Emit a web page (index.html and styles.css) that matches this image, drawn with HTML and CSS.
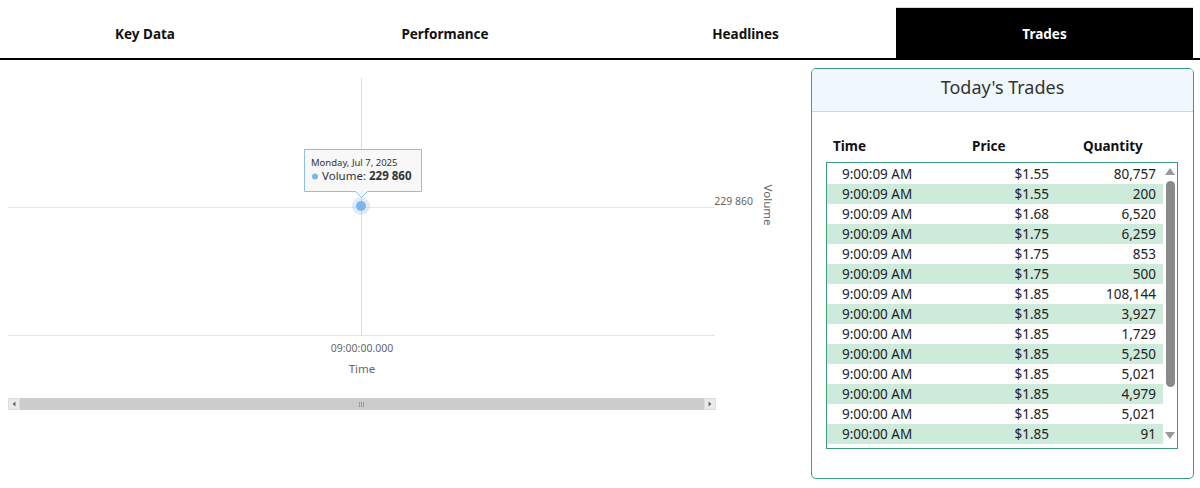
FILE: index.html
```html
<!DOCTYPE html>
<html>
<head>
<meta charset="utf-8">
<link rel="stylesheet" href="styles.css">
</head>
<body>
<div class="tabbar">
  <div class="tabs">
    <div class="tab">Key Data</div>
    <div class="tab">Performance</div>
    <div class="tab">Headlines</div>
    <div class="tab active">Trades</div>
  </div>
</div>
<div class="main">
  <div class="chart">
    <svg class="chart-svg" width="800" height="370" viewBox="0 60 800 370">
      <line x1="8" y1="207.5" x2="715" y2="207.5" stroke="#e6e6e6" stroke-width="1"/>
      <line x1="361.5" y1="78" x2="361.5" y2="335" stroke="#dddddd" stroke-width="1"/>
      <line x1="8" y1="335.5" x2="715" y2="335.5" stroke="#e0e6ee" stroke-width="1"/>
      <text x="753" y="205" class="lbl" text-anchor="end">229 860</text>
      <text x="0" y="0" class="ttl" text-anchor="middle" transform="translate(764 205) rotate(90)">Volume</text>
      <text x="362" y="352" class="lbl" text-anchor="middle">09:00:00.000</text>
      <text x="362" y="373" class="ttl" text-anchor="middle">Time</text>
      <circle cx="361" cy="206" r="9" fill="#7cb5ec" fill-opacity="0.25"/>
      <circle cx="361" cy="206" r="5" fill="#7cb5ec"/>
      <path d="M304.5 149.5 H421.5 V191.5 H367.5 L361.5 197.5 L355.5 191.5 H304.5 Z" fill="#f7f7f7" fill-opacity="0.9" stroke="#8fbfe8" stroke-width="1"/>
      <text x="311" y="166" class="tt-date">Monday, Jul 7, 2025</text>
      <circle cx="315" cy="176.5" r="3" fill="#7cb5ec"/>
      <text x="322" y="180" class="tt-val">Volume: <tspan class="tt-bold">229 860</tspan></text>
      <rect x="8" y="398" width="708" height="12" fill="#cccccc"/>
      <rect x="8.5" y="398.5" width="11" height="11" fill="#ebebeb" stroke="#dcdcdc"/>
      <path d="M15.5 401.5 L12.5 404 L15.5 406.5 Z" fill="#666"/>
      <rect x="704.5" y="398.5" width="11" height="11" fill="#ebebeb" stroke="#dcdcdc"/>
      <path d="M708.5 401.5 L711.5 404 L708.5 406.5 Z" fill="#666"/>
      <path d="M359.5 402 V407 M361.5 402 V407 M363.5 402 V407" stroke="#999" stroke-width="1"/>
    </svg>
  </div>
  <div class="card">
    <div class="card-head">Today's Trades</div>
    <div class="thead">
      <div>Time</div>
      <div>Price</div>
      <div>Quantity</div>
    </div>
    <div class="tbox">
      <div class="rows">
        <div class="row"><span>9:00:09 AM</span><span class="num">$1.55</span><span class="num">80,757</span></div>
        <div class="row alt"><span>9:00:09 AM</span><span class="num">$1.55</span><span class="num">200</span></div>
        <div class="row"><span>9:00:09 AM</span><span class="num">$1.68</span><span class="num">6,520</span></div>
        <div class="row alt"><span>9:00:09 AM</span><span class="num">$1.75</span><span class="num">6,259</span></div>
        <div class="row"><span>9:00:09 AM</span><span class="num">$1.75</span><span class="num">853</span></div>
        <div class="row alt"><span>9:00:09 AM</span><span class="num">$1.75</span><span class="num">500</span></div>
        <div class="row"><span>9:00:09 AM</span><span class="num">$1.85</span><span class="num">108,144</span></div>
        <div class="row alt"><span>9:00:00 AM</span><span class="num">$1.85</span><span class="num">3,927</span></div>
        <div class="row"><span>9:00:00 AM</span><span class="num">$1.85</span><span class="num">1,729</span></div>
        <div class="row alt"><span>9:00:00 AM</span><span class="num">$1.85</span><span class="num">5,250</span></div>
        <div class="row"><span>9:00:00 AM</span><span class="num">$1.85</span><span class="num">5,021</span></div>
        <div class="row alt"><span>9:00:00 AM</span><span class="num">$1.85</span><span class="num">4,979</span></div>
        <div class="row"><span>9:00:00 AM</span><span class="num">$1.85</span><span class="num">5,021</span></div>
        <div class="row alt"><span>9:00:00 AM</span><span class="num">$1.85</span><span class="num">91</span></div>
      </div>
      <div class="vscroll">
        <div class="arrow up"></div>
        <div class="thumb"></div>
        <div class="arrow down"></div>
      </div>
    </div>
  </div>
</div>
</body>
</html>
```
FILE: styles.css
```css
html, body {
  margin: 0;
  padding: 0;
  background: #ffffff;
}
body {
  font-family: "Noto Sans", "Open Sans", Arial, sans-serif;
  color: #222;
  width: 1200px;
  height: 488px;
  overflow: hidden;
}
.tabbar {
  padding-top: 7px;
  border-bottom: 2px solid #000;
  height: 51px;
}
.tabs {
  display: grid;
  grid-template-columns: 300px 300px 301px 297px;
  margin-left: -5px;
  height: 51px;
}
.tab {
  display: flex;
  align-items: center;
  justify-content: center;
  font-weight: 700;
  font-size: 13.5px;
  color: #111;
  padding-top: 3px;
}
.tab.active {
  background: #000;
  color: #fff;
  border-top: 1px solid #d8d8d8;
  padding-top: 2px;
}
.main {
  display: flex;
  align-items: flex-start;
}
.chart {
  flex: 0 0 811px;
  height: 370px;
}
.chart-svg {
  display: block;
  font-family: "Noto Sans", "Open Sans", Arial, sans-serif;
}
.lbl {
  font-size: 10.5px;
  fill: #666;
}
.ttl {
  font-size: 11.5px;
  fill: #666;
}
.tt-date {
  font-size: 9.5px;
  fill: #333;
}
.tt-val {
  font-size: 11.5px;
  fill: #333;
}
.tt-bold {
  font-weight: 700;
}
.card {
  margin-top: 8px;
  width: 383px;
  height: 411px;
  box-sizing: border-box;
  border: 1px solid #3d9c7c;
  border-radius: 5px;
  overflow: hidden;
}
.card-head {
  height: 42px;
  background: #f0f8fd;
  border-bottom: 1px solid #cfd6da;
  text-align: center;
  font-size: 18px;
  line-height: 36px;
  color: #333;
}
.thead {
  display: grid;
  grid-template-columns: 139px 111px auto;
  padding: 24px 0 0 21px;
  height: 26px;
  font-weight: 700;
  font-size: 13.5px;
  color: #111;
  line-height: 20px;
}
.tbox {
  margin: 0 15px 0 14px;
  height: 287px;
  box-sizing: border-box;
  border: 1px solid #3d9c7c;
  display: flex;
}
.rows {
  flex: 1;
  padding-top: 1px;
}
.row {
  display: grid;
  grid-template-columns: 1fr 95px 107px;
  padding: 0 7px 0 15px;
  height: 20px;
  line-height: 21px;
  font-size: 13.5px;
  color: #222;
}
.row.alt {
  background: #cdeadb;
}
.num {
  text-align: right;
}
.vscroll {
  flex: 0 0 14px;
  display: flex;
  flex-direction: column;
  align-items: center;
  padding-top: 5px;
}
.arrow {
  width: 0;
  height: 0;
  border-left: 5px solid transparent;
  border-right: 5px solid transparent;
}
.arrow.up {
  border-bottom: 7px solid #9a9a9a;
}
.arrow.down {
  border-top: 7px solid #9a9a9a;
  margin-top: 45px;
}
.thumb {
  margin-top: 6px;
  width: 9px;
  height: 206px;
  border-radius: 5px;
  background: #8a8a8a;
}
```
